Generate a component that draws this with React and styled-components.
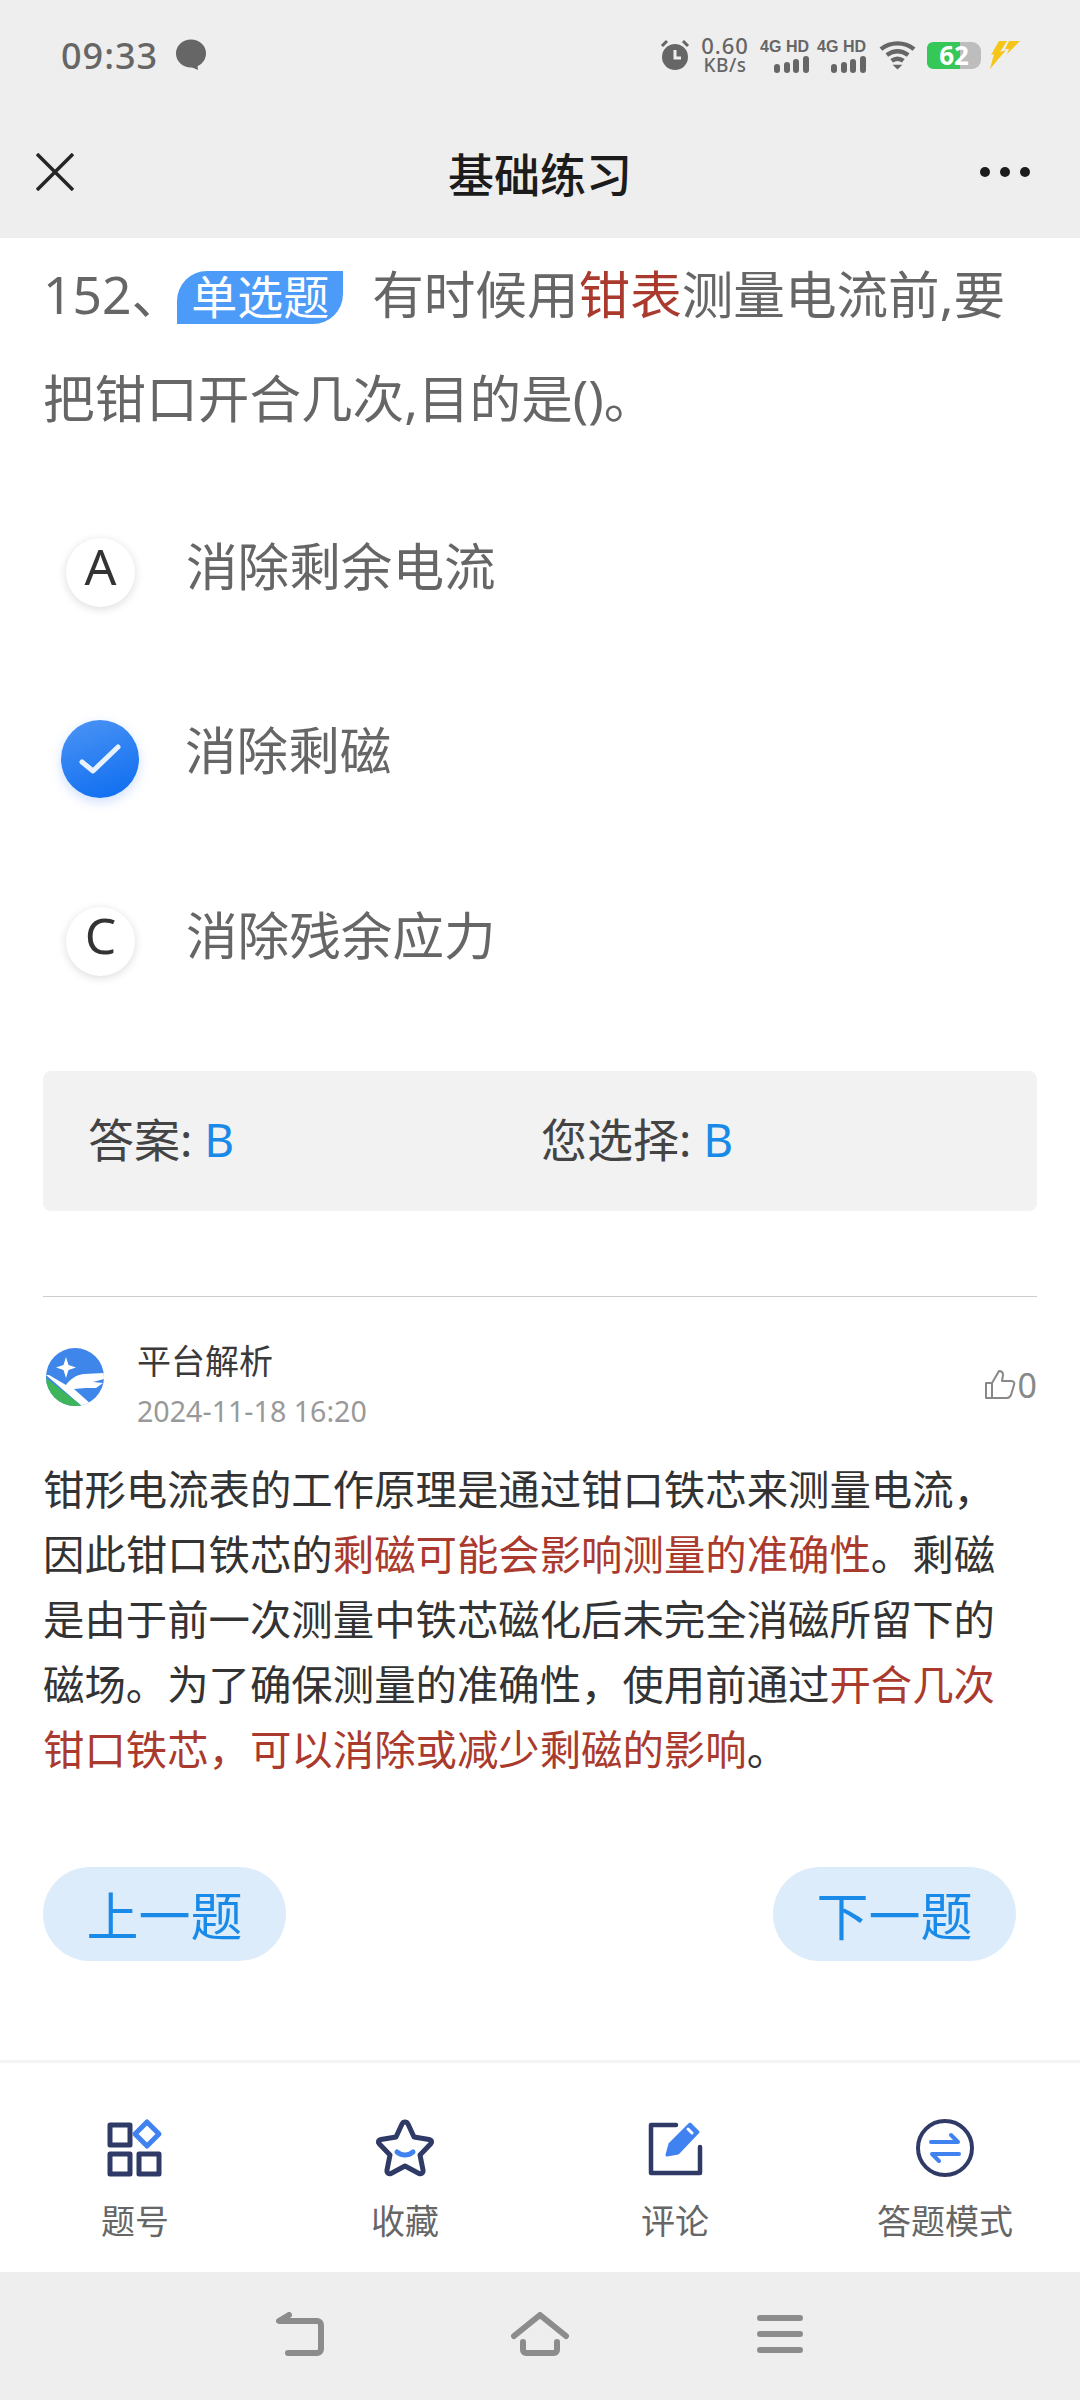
import React from "react"
import styled, { createGlobalStyle } from "styled-components"

const GlobalStyle = createGlobalStyle`
html, body {
  margin: 0;
  padding: 0;
  background: #ffffff;
}
* {
  box-sizing: border-box;
}
body {
  font-family: "Noto Sans", "Noto Sans CJK SC", sans-serif;
}
`;

const Page = styled.div`
  width: 1080px;
  height: 2400px;
  display: flex;
  flex-direction: column;
  overflow: hidden;
`;

const Header = styled.header`
  height: 238px;
  background: #eeeeee;
  display: flex;
  flex-direction: column;
`;

const StatusBar = styled.div`
  height: 110px;
  padding: 0 60px 0 61px;
  display: flex;
  align-items: center;
  color: #666666;
`;

const Time = styled.span`
  font-size: 36px;
  font-weight: 500;
  letter-spacing: 1px;
`;

const ChatBubble = styled.svg`
  width: 32px;
  height: 32px;
  margin-left: 17px;
`;

const StatusRight = styled.div`
  margin-left: auto;
  display: flex;
  align-items: center;
`;

const Speed = styled.div`
  width: 48px;
  margin: 0 13px 0 11px;
  display: flex;
  flex-direction: column;
  align-items: center;
  font-size: 22px;
  line-height: 20px;
  font-weight: 500;
  letter-spacing: 1px;
`;

const SpeedUnit = styled.span`
  font-size: 19px;
  line-height: 21px;
  letter-spacing: 0.5px;
`;

const Net = styled.div`
  width: 47px;
  margin-right: ${props => props.$gap}px;
  display: flex;
  flex-direction: column;
  align-items: flex-end;
  font-family: "Liberation Sans", sans-serif;
  font-size: 16px;
  line-height: 18px;
  font-weight: 700;
  white-space: nowrap;
`;

const Battery = styled.div`
  width: 54px;
  height: 27px;
  margin: 0 9px 0 11px;
  border-radius: 6px 9px 9px 6px;
  background: linear-gradient(90deg, #36c759 0 61%, #bdbdbd 61% 100%);
  color: #ffffff;
  font-size: 26px;
  font-weight: 700;
  line-height: 27px;
  text-align: center;
`;

const NavBar = styled.div`
  flex: 1;
  padding-bottom: 4px;
  display: grid;
  grid-template-columns: 1fr auto 1fr;
  align-items: center;
`;

const CloseIcon = styled.svg`
  width: 38px;
  height: 38px;
  margin-left: 36px;
`;

const MoreIcon = styled.svg`
  width: 50px;
  height: 12px;
  margin-right: 50px;
  justify-self: end;
`;

const NavTitle = styled.h1`
  margin: 0;
  font-size: 46px;
  font-weight: 500;
  color: #1c1c1c;
`;

const Content = styled.main`
  flex: 1;
  padding: 4px 43px 0 43px;
  background: #ffffff;
`;

const Question = styled.div`
  font-size: 51.6px;
  line-height: 104px;
  color: #666666;
`;

const TypeChip = styled.span`
  display: inline-block;
  width: 166px;
  height: 53px;
  margin: 0 29px 0 -6px;
  border-radius: 30px 0 30px 0;
  background: #4c9bf8;
  color: #ffffff;
  font-size: 46px;
  line-height: 50px;
  text-align: center;
  vertical-align: 0px;
`;

const Mark = styled.span`
  color: #ab3a2e;
`;

const Options = styled.div`
  margin-top: 21px;
  display: flex;
  flex-direction: column;
`;

const Option = styled.div`
  height: 184.5px;
  display: flex;
  align-items: center;
`;

const Badge = styled.div`
  width: 69px;
  height: 69px;
  margin: 18px 0 0 23px;
  padding-bottom: 12px;
  border-radius: 50%;
  background: #ffffff;
  box-shadow: 0 2px 10px rgba(0, 0, 0, 0.14);
  display: flex;
  align-items: center;
  justify-content: center;
  font-size: 50px;
  color: #333333;
`;

const CheckedBadge = styled.div`
  width: 78px;
  height: 78px;
  margin: 22px -5px 0 18px;
  border-radius: 50%;
  background: linear-gradient(160deg, #4d94f5, #0b6cf0);
  box-shadow: 0 4px 12px rgba(30, 110, 240, 0.22);
  display: flex;
  align-items: center;
  justify-content: center;
`;

const OptionText = styled.div`
  margin-left: 51px;
  font-size: 51.6px;
  color: #666666;
`;

const AnswerBox = styled.div`
  height: 140px;
  margin-top: 46px;
  padding: 0 0 8px 45px;
  border-radius: 8px;
  background: #f2f2f2;
  display: grid;
  grid-template-columns: 453px 1fr;
  align-items: center;
  font-size: 46px;
  color: #444444;
`;

const AnswerValue = styled.span`
  color: #1a8ae8;
`;

const Divider = styled.div`
  height: 1px;
  margin-top: 85px;
  background: #cccccc;
`;

const CommentHead = styled.div`
  height: 160px;
  display: flex;
  align-items: center;
`;

const Logo = styled.svg`
  width: 58px;
  height: 58px;
  margin: 0 33px 0 3px;
  flex-shrink: 0;
`;

const CommentMeta = styled.div`
  padding-top: 15px;
  display: flex;
  flex-direction: column;
`;

const Author = styled.div`
  font-size: 34px;
  line-height: 46px;
  color: #3a3a3a;
`;

const DateText = styled.div`
  margin-top: 7px;
  font-size: 28.6px;
  line-height: 40px;
  color: #999999;
`;

const Likes = styled.div`
  margin: 16px 0 0 auto;
  display: flex;
  align-items: center;
  gap: 2px;
  font-size: 34px;
  color: #888888;
`;

const Analysis = styled.p`
  margin: 0;
  padding-right: 20px;
  font-size: 41.4px;
  line-height: 65px;
  color: #333333;
`;

const Buttons = styled.div`
  margin-top: 85px;
  padding-right: 21px;
  display: flex;
  justify-content: space-between;
`;

const StepButton = styled.button`
  width: 243px;
  height: 94px;
  padding: 0;
  border: none;
  border-radius: 47px;
  background: #dcecfb;
  color: #1a8ae8;
  font-family: inherit;
  font-size: 52px;
`;

const TabBar = styled.nav`
  height: 212px;
  border-top: 3px solid #f4f4f4;
  background: #ffffff;
  display: grid;
  grid-template-columns: repeat(4, 270px);
`;

const Tab = styled.div`
  padding-top: 54px;
  display: flex;
  flex-direction: column;
  align-items: center;
`;

const TabIcon = styled.svg`
  width: 62px;
  height: 62px;
`;

const TabLabel = styled.span`
  margin-top: 20px;
  font-size: 34px;
  line-height: 44px;
  color: #666666;
`;

const SystemBar = styled.div`
  height: 128px;
  background: #eeeeee;
  padding-bottom: 4px;
  display: grid;
  grid-template-columns: repeat(3, 240px);
  justify-content: center;
  align-items: center;
  justify-items: center;
`;

const Signal = () => (
  <svg width="35" height="17" viewBox="0 0 35 17" fill="#666666">
    <rect x="0" y="8" width="6" height="9" rx="3" />
    <rect x="10" y="6" width="6" height="11" rx="3" />
    <rect x="19" y="3" width="6" height="14" rx="3" />
    <rect x="29" y="0" width="6" height="17" rx="3" />
  </svg>
);

const navy = "#2f3a66";
const blue = "#3f82f0";

const App = () => {
  return (
    <Page>
      <GlobalStyle />
      <Header>
        <StatusBar>
          <Time>09:33</Time>
          <ChatBubble viewBox="0 0 32 32">
            <ellipse cx="16" cy="14.5" rx="15" ry="14" fill="#666666" />
            <path d="M14 27l9 4-1-8z" fill="#666666" />
          </ChatBubble>
          <StatusRight>
            <svg width="30" height="32" viewBox="0 0 30 32">
              <circle cx="15" cy="18" r="13" fill="#666666" />
              <path d="M15 11v8h6" fill="none" stroke="#eeeeee" strokeWidth="3" />
              <path d="M2 7l5-5M28 7l-5-5" stroke="#666666" strokeWidth="3" />
            </svg>
            <Speed>
              0.60
              <SpeedUnit>KB/s</SpeedUnit>
            </Speed>
            <Net $gap={10}>
              4G HD
              <Signal />
            </Net>
            <Net $gap={13}>
              4G HD
              <Signal />
            </Net>
            <svg width="37" height="30" viewBox="0 0 38 30" fill="none" stroke="#666666" strokeWidth="4.5">
              <path d="M2 9c10-8 24-8 34 0" />
              <path d="M8 15c7-5 15-5 22 0" />
              <path d="M13 21c4-3 8-3 12 0" />
              <path d="M19 30l-5-5h10z" fill="#666666" stroke="none" />
            </svg>
            <Battery>62</Battery>
            <svg width="30" height="28" viewBox="0 0 30 28" fill="#f5c518">
              <path d="M9 0h8L10 11l6-2L0 28l4-15-3 1z" />
              <path d="M19 0h11L17 13l2-5h-4z" />
            </svg>
          </StatusRight>
        </StatusBar>
        <NavBar>
          <CloseIcon viewBox="0 0 38 38" stroke="#262626" strokeWidth="3.5" fill="none">
            <path d="M1 1l36 36M37 1L1 37" />
          </CloseIcon>
          <NavTitle>基础练习</NavTitle>
          <MoreIcon viewBox="0 0 50 12" fill="#1c1c1c">
            <circle cx="5" cy="6" r="5" />
            <circle cx="25" cy="6" r="5" />
            <circle cx="45" cy="6" r="5" />
          </MoreIcon>
        </NavBar>
      </Header>
      <Content>
        <Question>
          152、<TypeChip>单选题</TypeChip>有时候用<Mark>钳表</Mark>测量电流前,要把钳口开合几次,目的是()。
        </Question>
        <Options>
          <Option>
            <Badge>A</Badge>
            <OptionText>消除剩余电流</OptionText>
          </Option>
          <Option>
            <CheckedBadge>
              <svg width="44" height="36" viewBox="0 0 44 36" fill="none" stroke="#e8f2ff" strokeWidth="5" strokeLinecap="round" strokeLinejoin="round">
                <path d="M4 21l11 9L40 6" />
              </svg>
            </CheckedBadge>
            <OptionText>消除剩磁</OptionText>
          </Option>
          <Option>
            <Badge>C</Badge>
            <OptionText>消除残余应力</OptionText>
          </Option>
        </Options>
        <AnswerBox>
          <span>答案: <AnswerValue>B</AnswerValue></span>
          <span>您选择: <AnswerValue>B</AnswerValue></span>
        </AnswerBox>
        <Divider />
        <CommentHead>
          <Logo viewBox="0 0 58 58">
            <clipPath id="logoClip">
              <circle cx="29" cy="29" r="29" />
            </clipPath>
            <g clipPath="url(#logoClip)">
              <rect width="58" height="58" fill="#3f86ea" />
              <path d="M0 27l3 0 17 10c4-6 10-10 18-11l20-1v6l-11 3 10 1-7 5-10 0-12 1 18 16-8 3z" fill="#ffffff" />
              <path d="M0 30l36 28H0z" fill="#3fb55a" />
              <path d="M20 9l2.500 8 7.500 2.500-7.500 2.500-2.500 8-2.500-8-7.500-2.500 7.500-2.500z" fill="#ffffff" />
            </g>
          </Logo>
          <CommentMeta>
            <Author>平台解析</Author>
            <DateText>2024-11-18 16:20</DateText>
          </CommentMeta>
          <Likes>
            <svg width="32" height="32" viewBox="0 0 32 32" fill="none" stroke="#888888" strokeWidth="2" strokeLinejoin="round">
              <path d="M2 14h6v15H2z" />
              <path d="M8 14l7-12c3 0 4 2 4 4l-1 6h9c3 0 4 2 3 4l-3 10c-1 2-2 3-4 3H8" />
            </svg>
            0
          </Likes>
        </CommentHead>
        <Analysis>
          钳形电流表的工作原理是通过钳口铁芯来测量电流，因此钳口铁芯的<Mark>剩磁可能会影响测量的准确性</Mark>。剩磁是由于前一次测量中铁芯磁化后未完全消磁所留下的磁场。为了确保测量的准确性，使用前通过<Mark>开合几次钳口铁芯，可以消除或减少剩磁的影响</Mark>。
        </Analysis>
        <Buttons>
          <StepButton>上一题</StepButton>
          <StepButton>下一题</StepButton>
        </Buttons>
      </Content>
      <TabBar>
        <Tab>
          <TabIcon viewBox="0 0 62 62" fill="none" stroke={navy} strokeWidth="5" strokeLinejoin="round">
            <rect x="6" y="8" width="20" height="20" />
            <rect x="6" y="37" width="20" height="20" />
            <rect x="35" y="37" width="20" height="20" />
            <path d="M43 5l12 12-12 12-12-12z" stroke={blue} />
          </TabIcon>
          <TabLabel>题号</TabLabel>
        </Tab>
        <Tab>
          <TabIcon viewBox="0 0 62 62" fill="none" stroke={navy} strokeWidth="5" strokeLinejoin="round" strokeLinecap="round">
            <path d="M31 5c1.500 0 2.500 1 3 2l6 13 15 2.500c3 .5 3 3 2 4L46 38l3 15c.5 3-2 4.500-4 3.500L31 49l-14 7.500c-2 1-4.500-.5-4-3.500l3-15L5 26.500c-1-1-1-3.500 2-4L22 20l6-13c.5-1 1.500-2 3-2z" />
            <path d="M23 35c5 4 11 4 16 0" stroke={blue} />
          </TabIcon>
          <TabLabel>收藏</TabLabel>
        </Tab>
        <Tab>
          <TabIcon viewBox="0 0 62 62" fill="none" stroke={navy} strokeWidth="4.500" strokeLinecap="round" strokeLinejoin="round">
            <path d="M32 8H7v48h49V30" />
            <path d="M23 38l3-11L46 7l8 8-20 21z" fill={blue} stroke={blue} strokeWidth="3" />
            <path d="M44 12l4 4" stroke="#ffffff" strokeWidth="3" />
          </TabIcon>
          <TabLabel>评论</TabLabel>
        </Tab>
        <Tab>
          <TabIcon viewBox="0 0 62 62" fill="none" stroke={navy} strokeWidth="4" strokeLinecap="round" strokeLinejoin="round">
            <circle cx="31" cy="31" r="27" />
            <path d="M17 25h27l-7-7M45 37H18l7 7" stroke={blue} />
          </TabIcon>
          <TabLabel>答题模式</TabLabel>
        </Tab>
      </TabBar>
      <SystemBar>
        <svg width="48" height="44" viewBox="0 0 48 44" fill="none" stroke="#8c8c8c" strokeWidth="6" strokeLinecap="round" strokeLinejoin="round">
          <path d="M13 3L3 9h38a4 4 0 0 1 4 4v24a4 4 0 0 1-4 4H12" />
        </svg>
        <svg width="58" height="44" viewBox="0 0 58 44" fill="none" stroke="#8c8c8c" strokeWidth="6" strokeLinecap="round" strokeLinejoin="round">
          <path d="M3 24L29 3l26 21" />
          <path d="M12 30v8a3 3 0 0 0 3 3h28a3 3 0 0 0 3-3v-8" />
        </svg>
        <svg width="46" height="38" viewBox="0 0 46 38" fill="none" stroke="#8c8c8c" strokeWidth="6" strokeLinecap="round">
          <path d="M3 3h40M3 19h40M3 35h40" />
        </svg>
      </SystemBar>
    </Page>
  )
}

export default App
